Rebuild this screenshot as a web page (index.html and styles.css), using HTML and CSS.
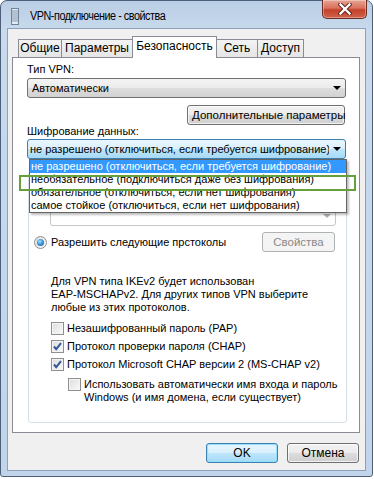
FILE: index.html
```html
<!DOCTYPE html>
<html lang="ru">
<head>
  <meta charset="UTF-8">
  <title>VPN-подключение - свойства</title>
  <link rel="stylesheet" href="styles.css">
</head>
<body>

  <div class="window">
    <div class="titlebar">
      <svg class="app-icon" width="8" height="17" viewBox="0 0 8 17">
        <rect x="0.5" y="0.5" width="7" height="16" fill="#e4eaf2" stroke="#71839b"/>
        <path d="M1 3h6M1 5h6M1 7h6M1 9h6M1 11h6M1 13h6" stroke="#8397b0" stroke-width="1"/>
      </svg>
      <span class="title">VPN-подключение - свойства</span>
      <div class="close-btn">
        <svg width="14" height="12" viewBox="0 0 14 12">
          <path d="M2.5 1.5l9 9M11.5 1.5l-9 9" stroke="#5a2219" stroke-width="4.2" stroke-linecap="square"/>
          <path d="M2.5 1.5l9 9M11.5 1.5l-9 9" stroke="#ffffff" stroke-width="2.4" stroke-linecap="square"/>
        </svg>
      </div>
    </div>

    <div class="client">
      <div class="tabs">
        <div class="tab tab-general">Общие</div>
        <div class="tab tab-params">Параметры</div>
        <div class="tab tab-security active">Безопасность</div>
        <div class="tab tab-net">Сеть</div>
        <div class="tab tab-access">Доступ</div>
      </div>

      <div class="panel">
        <div class="label label-first">Тип VPN:</div>
        <div class="combo">
          <span class="combo-text">Автоматически</span>
          <span class="arrow"></span>
        </div>
        <div class="right-row">
          <button class="btn btn-advanced">Дополнительные параметры</button>
        </div>

        <div class="label">Шифрование данных:</div>
        <div class="combo-wrap">
          <div class="combo combo-hot">
            <span class="combo-text">не разрешено (отключиться, если требуется шифрование)</span>
            <span class="arrow"></span>
          </div>
          <ul class="droplist">
            <li class="selected">не разрешено (отключиться, если требуется шифрование)</li>
            <li>необязательное (подключиться даже без шифрования)</li>
            <li>обязательное (отключиться, если нет шифрования)</li>
            <li>самое стойкое (отключиться, если нет шифрования)</li>
          </ul>
          <div class="mark"></div>
        </div>

        <div class="group">
          <div class="radio-row hidden-row">
            <span class="radio"></span>
          </div>
          <div class="combo combo-disabled">
            <span></span>
            <span class="arrow"></span>
          </div>
          <div class="radio-row with-btn">
            <span class="radio checked"></span>
            <span class="grow">Разрешить следующие прстоколы</span>
            <button class="btn btn-props" disabled>Свойства</button>
          </div>

          <p class="note">Для VPN типа IKEv2 будет использован<br>EAP-MSCHAPv2. Для других типов VPN выберите<br>любые из этих протоколов.</p>

          <div class="checks">
            <div class="check-row">
              <span class="check"></span>
              <span>Незашифрованный пароль (PAP)</span>
            </div>
            <div class="check-row">
              <span class="check checked">
                <svg width="11" height="11" viewBox="0 0 11 11"><path d="M2 5.5l2.2 2.6L9 2.2" fill="none" stroke="#34589a" stroke-width="2"/></svg>
              </span>
              <span>Протокол проверки пароля (CHAP)</span>
            </div>
            <div class="check-row">
              <span class="check checked">
                <svg width="11" height="11" viewBox="0 0 11 11"><path d="M2 5.5l2.2 2.6L9 2.2" fill="none" stroke="#34589a" stroke-width="2"/></svg>
              </span>
              <span>Протокол Microsoft CHAP версии 2 (MS-CHAP v2)</span>
            </div>
          </div>

          <div class="check-row sub">
            <span class="check"></span>
            <span class="sub-text">Использовать автоматически имя входа и пароль<br>Windows (и имя домена, если существует)</span>
          </div>
        </div>
      </div>

      <div class="buttons">
        <button class="btn btn-default">OK</button>
        <button class="btn">Отмена</button>
      </div>
    </div>
  </div>

</body>
</html>
```

FILE: styles.css
```css
* {
  box-sizing: border-box;
}

body {
  margin: 0;
  background: #ffffff;
  font-family: 'Liberation Sans', Arial, sans-serif;
  font-size: 11px;
  color: #000;
}

.window {
  width: 373px;
  border: 1px solid #4d6079;
  border-radius: 7px 7px 3px 3px;
  background: linear-gradient(to bottom, #b9cde4 0, #c9daed 30px, #c1d4e9 100%);
  padding: 0 6px 5px 6px;
}

.titlebar {
  height: 27px;
  display: flex;
  align-items: center;
}

.app-icon {
  margin-left: 4px;
  margin-top: 3px;
}

.title {
  margin-left: 11px;
  margin-top: 2px;
  font-size: 12px;
  letter-spacing: -0.5px;
  transform: scaleX(0.9);
  transform-origin: left center;
  white-space: nowrap;
}

.close-btn {
  margin-left: auto;
  margin-right: -1px;
  margin-top: -1px;
  align-self: flex-start;
  width: 45px;
  height: 19px;
  border: 1px solid #6b2a22;
  border-top: none;
  border-radius: 0 0 5px 5px;
  background: linear-gradient(to bottom, #e8a493 0, #d8715c 45%, #c4412a 55%, #d0624a 100%);
  box-shadow: inset 0 0 0 1px rgba(255,255,255,0.35);
  display: flex;
  align-items: center;
  justify-content: center;
}

.client {
  border: 1px solid #8ca0b8;
  background: #f0f0f0;
  padding: 0 0 7px 0;
}

/* tabs */

.tabs {
  display: flex;
  align-items: flex-end;
  height: 28px;
  padding-top: 7px;
  margin-left: 10px;
  position: relative;
  z-index: 1;
  font-size: 12px;
}

.tab {
  height: 18px;
  line-height: 16px;
  text-align: center;
  border: 1px solid #898c95;
  border-bottom: none;
  border-right: none;
  background: linear-gradient(to bottom, #f3f3f3, #e5e5e5);
  white-space: nowrap;
}

.tab-access {
  border-right: 1px solid #898c95;
}

.tab-general { width: 43px; }
.tab-params { width: 71px; }
.tab-security { width: 85px; }
.tab-net { width: 40px; }
.tab-access { width: 47px; }

.tab.active {
  height: 22px;
  margin-bottom: -1px;
  line-height: 18px;
  background: #ffffff;
  border-right: 1px solid #898c95;
}

.tab.active + .tab {
  border-left: none;
}

.panel {
  margin: 0 5px 0 4px;
  border: 1px solid #898c95;
  background: #ffffff;
  padding: 4px 13px 9px 14px;
  display: flex;
  flex-direction: column;
}

.label {
  line-height: 13px;
}

.label-first {
  line-height: 15px;
}

/* combo boxes */

.combo {
  height: 20px;
  margin-top: 1px;
  border: 1px solid #707070;
  border-radius: 3px;
  background: linear-gradient(to bottom, #f4f4f4 0, #ebebeb 50%, #dddddd 51%, #d2d2d2 100%);
  display: flex;
  align-items: center;
  gap: 4px;
  padding: 0 4px 0 4px;
  white-space: nowrap;
}

.combo-text {
  flex: 1;
  overflow: hidden;
}

.arrow {
  width: 0;
  height: 0;
  border-left: 4px solid transparent;
  border-right: 4px solid transparent;
  border-top: 4px solid #000;
  margin-left: auto;
  flex-shrink: 0;
}

.combo-wrap {
  position: relative;
  margin-top: 1px;
}

.combo-wrap .combo {
  margin-top: 0;
}

.combo-hot {
  border-color: #3c7fb1;
  background: linear-gradient(to bottom, #eaf6fd 0, #d9f0fc 50%, #bee6fd 51%, #a7d9f5 100%);
  padding-left: 2px;
}

.combo-disabled {
  margin: 9px 0 0 16px;
  border-color: #c3c7ca;
  background: #ffffff;
}

.combo-disabled .arrow {
  border-top-color: #b0b0b0;
}

.droplist {
  position: absolute;
  top: 20px;
  left: 2px;
  width: 318px;
  margin: 0;
  padding: 0;
  list-style: none;
  background: #ffffff;
  border: 1px solid #646464;
  box-shadow: 2px 2px 2px rgba(0,0,0,0.25);
  z-index: 2;
}

.droplist li {
  height: 13px;
  line-height: 13px;
  padding-left: 1px;
  white-space: nowrap;
}

.droplist li.selected {
  background: #3399ff;
  color: #ffffff;
}

.mark {
  position: absolute;
  top: 36px;
  left: -8px;
  width: 337px;
  height: 16px;
  border: 2px solid #66a03a;
  z-index: 3;
}

/* buttons */

.btn {
  font-family: inherit;
  font-size: 11.5px;
  color: #000;
  height: 20px;
  padding: 0 4px;
  border: 1px solid #707070;
  border-radius: 3px;
  background: linear-gradient(to bottom, #f2f2f2 0, #ebebeb 50%, #dddddd 51%, #cfcfcf 100%);
  box-shadow: inset 0 0 0 1px rgba(255,255,255,0.7);
  white-space: nowrap;
}

.right-row {
  display: flex;
  justify-content: flex-end;
  margin-top: 7px;
}

.btn-advanced {
  width: 158px;
  margin-right: 1px;
}

.btn-props {
  width: 73px;
  margin-right: 1px;
  color: #8a8a8a;
  border-color: #adb2b5;
  background: #f4f4f4;
  box-shadow: none;
}

.buttons {
  display: flex;
  justify-content: flex-end;
  gap: 9px;
  margin: 10px 6px 0 0;
}

.buttons .btn {
  width: 72px;
  font-size: 12px;
}

.btn-default {
  border-color: #3c7fb1;
  background: linear-gradient(to bottom, #eaf6fd 0, #d9f0fc 50%, #bee6fd 51%, #a7d9f5 100%);
  box-shadow: inset 0 0 1px 1px #8fe0fb;
}

/* group */

.group {
  margin: 12px -1px 0 1px;
  border: 1px solid #d5dfe5;
  border-radius: 3px;
  padding: 0 10px 18px 5px;
  display: flex;
  flex-direction: column;
}

.radio-row {
  display: flex;
  align-items: center;
  gap: 4px;
  height: 16px;
  margin-top: 3px;
}

.hidden-row {
  margin-top: 9px;
}

.radio-row.with-btn {
  height: 20px;
  margin-top: 6px;
}

.grow {
  flex: 1;
}

.radio {
  width: 13px;
  height: 13px;
  border: 1px solid #8e8f8f;
  border-radius: 50%;
  background: linear-gradient(135deg, #dcdcdc, #fbfbfb);
  display: flex;
  align-items: center;
  justify-content: center;
  flex-shrink: 0;
}

.radio.checked::after {
  content: '';
  width: 7px;
  height: 7px;
  border-radius: 50%;
  background: radial-gradient(circle at 40% 35%, #a9e3ff 0, #3c98dc 45%, #1a4f8c 100%);
}

.note {
  margin: 23px 0 0 17px;
  line-height: 13px;
}

.checks {
  display: flex;
  flex-direction: column;
  gap: 2px;
  margin: 6px 0 0 17px;
}

.check-row {
  display: flex;
  align-items: center;
  gap: 3px;
  height: 16px;
}

.check {
  width: 13px;
  height: 13px;
  border: 1px solid #8f8f8f;
  background: linear-gradient(135deg, #dcdcdc, #fafafa);
  box-shadow: inset 0 0 0 1px #f4f4f4;
  display: flex;
  align-items: center;
  justify-content: center;
  flex-shrink: 0;
}

.check-row.sub {
  height: auto;
  align-items: flex-start;
  margin: 6px 0 0 34px;
  line-height: 13px;
}

.sub-text {
  white-space: nowrap;
}
```
